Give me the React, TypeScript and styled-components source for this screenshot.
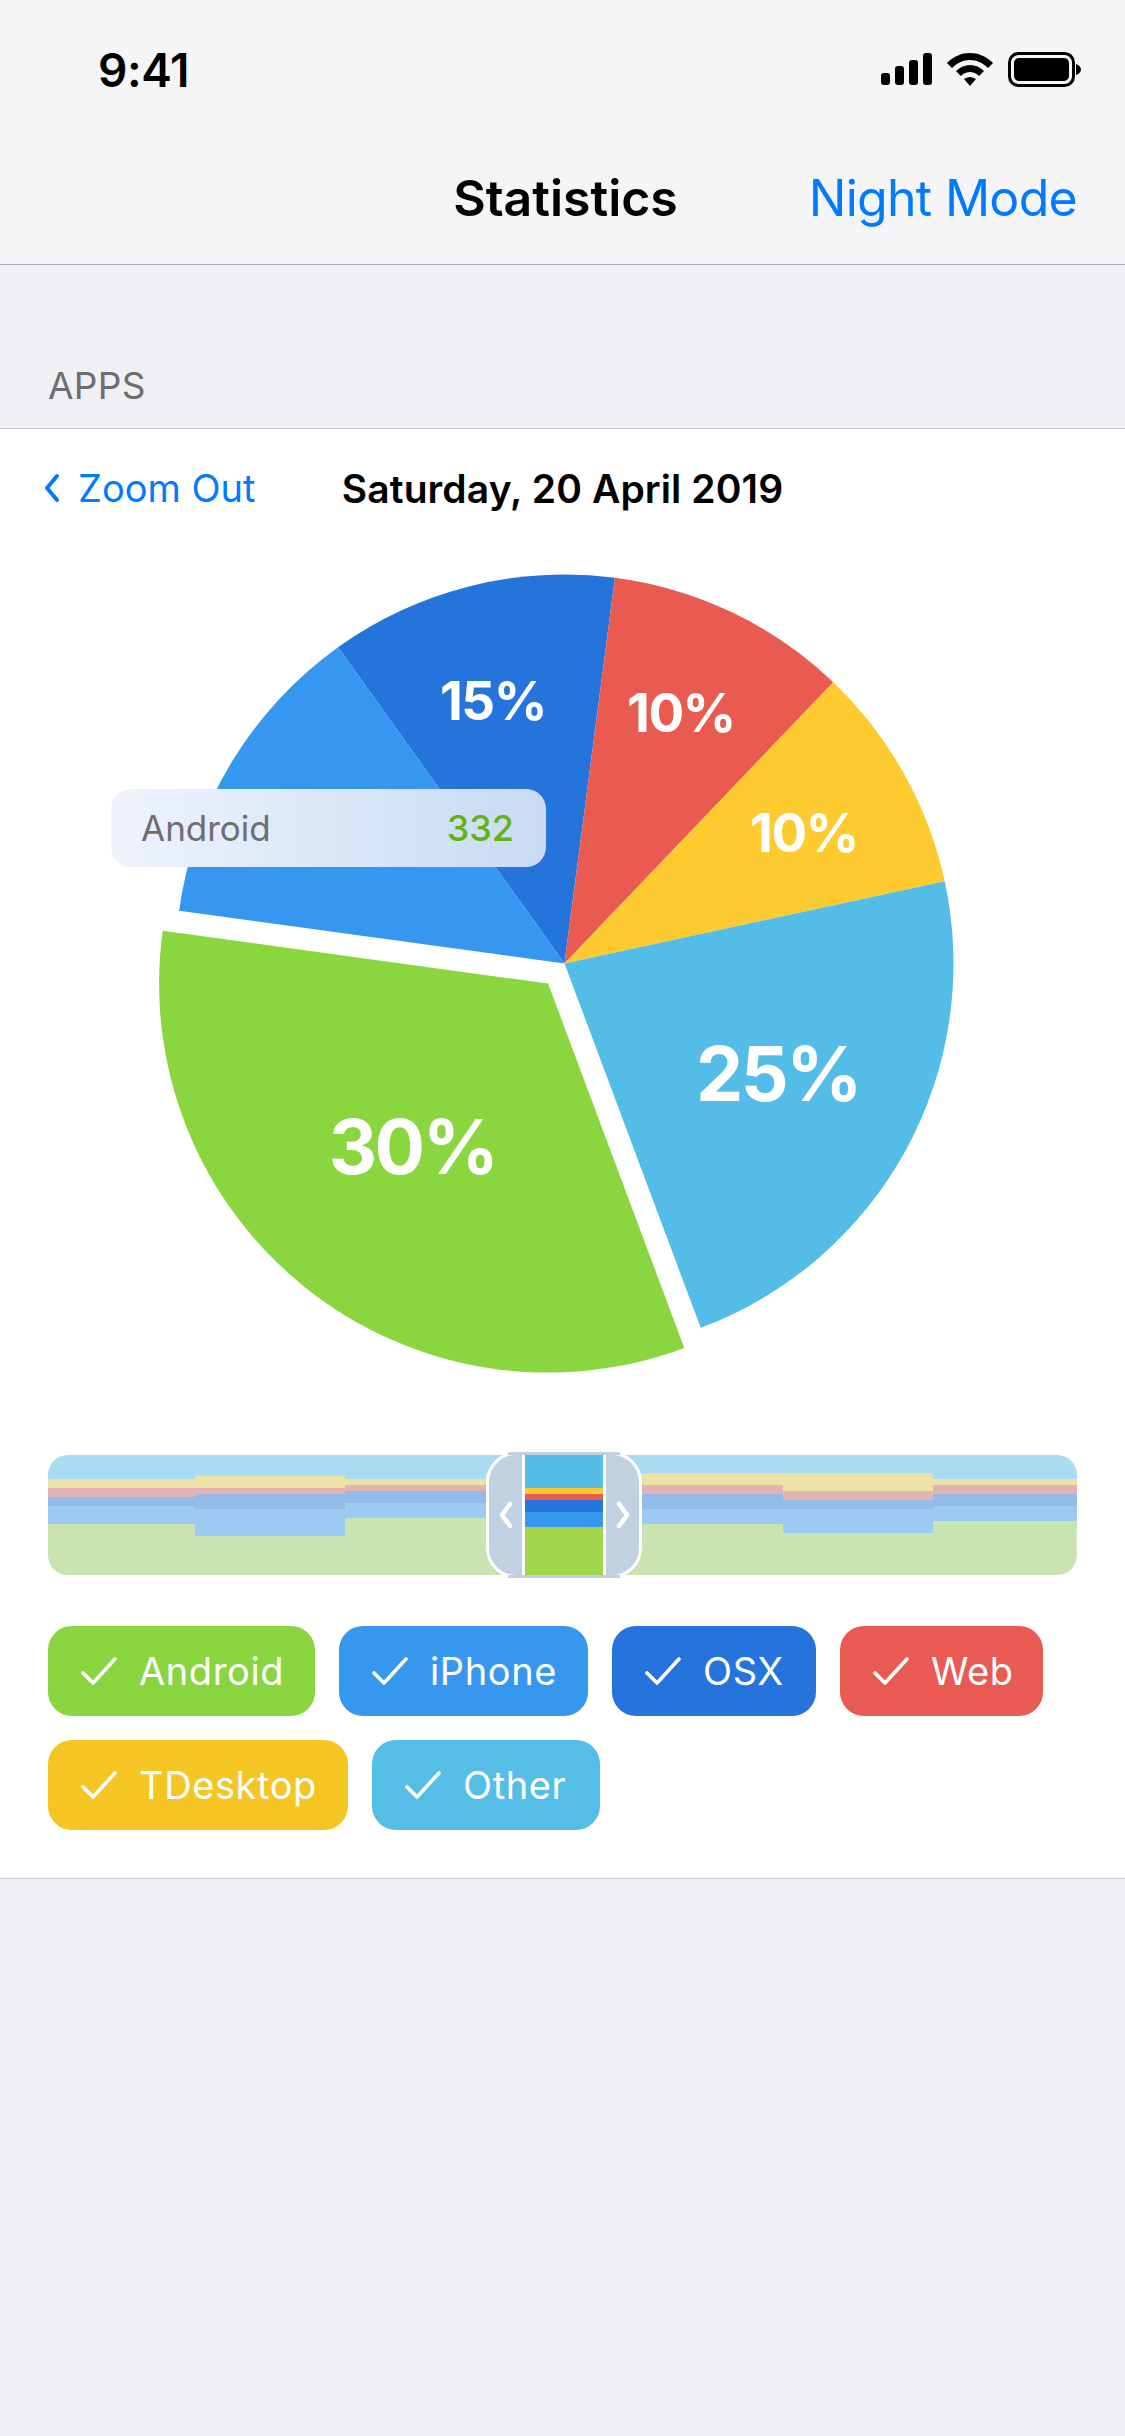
import React from 'react'
import styled, { createGlobalStyle } from 'styled-components'

const GlobalStyle = createGlobalStyle`
  html, body {
    margin: 0;
    padding: 0;
    background: #efeff4;
    font-family: Inter, "Liberation Sans", sans-serif;
  }
`

const Page = styled.div`
  width: 1125px;
  height: 2436px;
  background: #efeff4;
  overflow: hidden;
`

const Header = styled.header`
  background: #f5f5f7;
  border-bottom: 1px solid #adadb0;
`

const StatusBar = styled.div`
  height: 132px;
  box-sizing: border-box;
  padding: 45px 44px 0 98px;
  display: flex;
  justify-content: space-between;
  align-items: flex-start;
`

const Clock = styled.span`
  font-size: 46px;
  line-height: 50px;
  font-weight: 600;
  letter-spacing: -0.4px;
  color: #000;
`

const StatusIcons = styled.svg`
  display: block;
  margin-top: 7px;
`

const NavBar = styled.nav`
  height: 132px;
  box-sizing: border-box;
  padding: 0 48px;
  display: grid;
  grid-template-columns: 1fr auto 1fr;
  align-items: center;
`

const NavTitle = styled.h1`
  grid-column: 2;
  margin: 0 0 0 6px;
  font-size: 50px;
  font-weight: 600;
  color: #000;
`

const NavAction = styled.a`
  grid-column: 3;
  justify-self: end;
  font-size: 50px;
  font-weight: 400;
  letter-spacing: -0.7px;
  color: #007aff;
`

const SectionLabel = styled.div`
  height: 163px;
  box-sizing: border-box;
  padding: 99px 48px 0;
  font-size: 37px;
  line-height: 44px;
  letter-spacing: 0.3px;
  color: #6d6d72;
`

const Card = styled.section`
  background: #fff;
  border-top: 1px solid #c8c7cc;
  border-bottom: 1px solid #c8c7cc;
  padding-bottom: 48px;
`

const ChartTop = styled.div`
  height: 111px;
  box-sizing: border-box;
  padding: 7px 46px 0;
  display: grid;
  grid-template-columns: 1fr auto 1fr;
  align-items: center;
`

const ZoomOut = styled.a`
  margin-left: -2px;
  display: flex;
  align-items: center;
  gap: 18px;
  font-size: 38px;
  color: #007aff;
`

const DateTitle = styled.div`
  font-size: 39px;
  font-weight: 600;
  letter-spacing: 0.1px;
  color: #000;
`

const PieWrap = styled.div`
  position: relative;
  height: 860px;
`

const PieSvg = styled.svg`
  display: block;
`

const PieLabel = styled.text`
  fill: #fff;
  font-family: Inter, "Liberation Sans", sans-serif;
  font-weight: 700;
  text-anchor: middle;
`

const Tooltip = styled.div`
  position: absolute;
  left: 111px;
  top: 249px;
  width: 435px;
  height: 78px;
  box-sizing: border-box;
  padding: 0 32px 0 30px;
  border-radius: 20px;
  background: linear-gradient(90deg, #eff3fb 0%, #d6e5f7 60%, #c9dbf3 100%);
  display: flex;
  justify-content: space-between;
  align-items: center;
`

const TooltipName = styled.span`
  font-size: 35px;
  color: #6d6d72;
`

const TooltipValue = styled.span`
  font-size: 36px;
  font-weight: 500;
  color: #62b216;
`

const Overview = styled.div`
  position: relative;
  margin: 55px 48px 0;
  height: 120px;
`

const OverviewTrack = styled.div`
  height: 120px;
  border-radius: 20px;
  overflow: hidden;
  display: flex;
`

const OverviewColumn = styled.div<{ $width: number }>`
  width: ${(p) => p.$width}px;
  flex: none;
  display: flex;
  flex-direction: column;
`

const Band = styled.div<{ $height: number; $color: string }>`
  height: ${(p) => p.$height}px;
  flex: none;
  background: ${(p) => p.$color};
`

const Handle = styled.div`
  position: absolute;
  left: 438px;
  top: -3px;
  width: 156px;
  height: 126px;
  box-sizing: border-box;
  border: 3px solid #fff;
  border-radius: 30px;
  background: #c0d1e1;
  display: flex;

  /* the white rim only runs round the sides, flat edges stay blue */
  &::before,
  &::after {
    content: '';
    position: absolute;
    left: 19px;
    right: 19px;
    height: 3px;
    background: #c0d1e1;
  }
  &::before {
    top: -3px;
  }
  &::after {
    bottom: -3px;
  }
`

const Grip = styled.div`
  width: 33px;
  display: flex;
  justify-content: center;
  align-items: center;
`

const Strip = styled.div`
  width: 78px;
  flex: none;
  display: flex;
  flex-direction: column;
  border-left: 3px solid #fff;
  border-right: 3px solid #fff;
`

const Chips = styled.div`
  margin: 51px 48px 0;
  display: flex;
  flex-wrap: wrap;
  gap: 24px;
`

const Chip = styled.div<{ $color: string; $width: number }>`
  width: ${(p) => p.$width}px;
  height: 90px;
  box-sizing: border-box;
  padding-left: 33px;
  border-radius: 24px;
  background: ${(p) => p.$color};
  display: flex;
  align-items: center;
  gap: 22px;
  font-size: 38px;
  letter-spacing: 0.6px;
  color: #fff;
`

const CENTER = { x: 564.5, y: 423.5 }
const RADIUS = 389

type Slice = {
  from: number
  to: number
  color: string
  dx?: number
  dy?: number
}

const slices: Slice[] = [
  { from: 324.4, to: 367.45, color: '#2574dc' },
  { from: 7.45, to: 43.7, color: '#e95a51' },
  { from: 43.7, to: 77.8, color: '#fdca2f' },
  { from: 77.8, to: 159.5, color: '#54bde7' },
  { from: 159.5, to: 277.8, color: '#89d63f', dx: -16.4, dy: 20.1 },
  { from: 277.8, to: 324.4, color: '#3597ef' },
]

const labels = [
  { text: '15%', x: 493, y: 180, size: 53, spacing: -1.5 },
  { text: '10%', x: 681, y: 192, size: 53, spacing: -1.5 },
  { text: '10%', x: 804, y: 312, size: 53, spacing: -1.5 },
  { text: '25%', x: 778, y: 561, size: 75, spacing: -2.5 },
  { text: '30%', x: 412.5, y: 634, size: 75, spacing: -2.5 },
]

const point = (deg: number) => {
  const rad = (deg * Math.PI) / 180
  return { x: CENTER.x + RADIUS * Math.sin(rad), y: CENTER.y - RADIUS * Math.cos(rad) }
}

const slicePath = (s: Slice) => {
  const a = point(s.from)
  const b = point(s.to)
  const large = s.to - s.from > 180 ? 1 : 0
  return `M${CENTER.x} ${CENTER.y}L${a.x} ${a.y}A${RADIUS} ${RADIUS} 0 ${large} 1 ${b.x} ${b.y}Z`
}

const overviewColumns = [
  { width: 147, bands: [24, 9, 9, 9, 18, 51] },
  { width: 150, bands: [21, 12, 6, 15, 27, 39] },
  { width: 141, bands: [24, 6, 6, 12, 15, 57] },
  { width: 156, bands: [18, 12, 9, 15, 15, 51] },
  { width: 141, bands: [18, 12, 9, 15, 15, 51] },
  { width: 150, bands: [18, 18, 9, 9, 24, 42] },
  { width: 144, bands: [24, 6, 9, 12, 15, 54] },
]

const overviewColors = ['#a8dcf2', '#ede2a8', '#e3b2b2', '#93bbe9', '#9bcaf3', '#c9e4b0']

const stripBands = [
  { height: 33, color: '#54bde7' },
  { height: 6, color: '#fdca2f' },
  { height: 6, color: '#e95a51' },
  { height: 12, color: '#2574dc' },
  { height: 15, color: '#3597ef' },
  { height: 48, color: '#9fd64a' },
]

const filters = [
  { name: 'Android', color: '#89d53f', width: 267 },
  { name: 'iPhone', color: '#3597ed', width: 249 },
  { name: 'OSX', color: '#2573dc', width: 204 },
  { name: 'Web', color: '#e95a52', width: 203 },
  { name: 'TDesktop', color: '#f5c523', width: 300 },
  { name: 'Other', color: '#55bee7', width: 228 },
]

const Check = () => (
  <svg width="36" height="30" viewBox="0 0 36 30" fill="none">
    <path d="M2 17L12 27L34 3" stroke="#fff" strokeWidth="3.6" strokeLinecap="round" strokeLinejoin="round" />
  </svg>
)

const Chevron = ({ dir }: { dir: 'left' | 'right' }) => (
  <svg width="14" height="28" viewBox="0 0 14 28" fill="none">
    <path
      d={dir === 'left' ? 'M11 3L3 14L11 25' : 'M3 3L11 14L3 25'}
      stroke="#fff"
      strokeWidth="4.5"
      strokeLinecap="round"
      strokeLinejoin="round"
    />
  </svg>
)

const App = () => {
  return (
    <Page>
      <GlobalStyle />
      <Header>
        <StatusBar>
          <Clock>9:41</Clock>
          <StatusIcons width="200" height="36" viewBox="0 0 200 36" fill="#000">
            <rect x="0" y="21" width="9" height="12" rx="3" />
            <rect x="14" y="14" width="9" height="19" rx="3" />
            <rect x="28" y="8" width="9" height="25" rx="3" />
            <rect x="42" y="1" width="9" height="32" rx="3" />
            <path d="M89 1C97 1 105 4 112 11L107 16C102 11 96 8 89 8C82 8 76 11 71 16L66 11C73 4 81 1 89 1Z" />
            <path d="M89 13C94 13 99 15 103 19L98 24C95 21 92 20 89 20C86 20 83 21 80 24L75 19C79 15 84 13 89 13Z" />
            <path d="M89 25C91 25 93 26 95 27L89 34L83 27C85 26 87 25 89 25Z" />
            <rect x="128.500" y="1.500" width="64" height="32" rx="9" fill="none" stroke="#000" strokeWidth="3" />
            <rect x="133" y="6" width="55" height="23" rx="5" />
            <path d="M195 12C198 13 200 15 200 17.500C200 20 198 22 195 23Z" />
          </StatusIcons>
        </StatusBar>
        <NavBar>
          <NavTitle>Statistics</NavTitle>
          <NavAction>Night Mode</NavAction>
        </NavBar>
      </Header>

      <SectionLabel>APPS</SectionLabel>

      <Card>
        <ChartTop>
          <ZoomOut>
            <svg width="16" height="30" viewBox="0 0 16 30" fill="none">
              <path d="M13 3L3 15L13 27" stroke="#007aff" strokeWidth="4" strokeLinecap="round" strokeLinejoin="round" />
            </svg>
            Zoom Out
          </ZoomOut>
          <DateTitle>Saturday, 20 April 2019</DateTitle>
        </ChartTop>

        <PieWrap>
          <PieSvg width="1125" height="860" viewBox="0 0 1125 860">
            {slices.map((s) => (
              <path
                key={s.color}
                d={slicePath(s)}
                fill={s.color}
                transform={s.dx ? `translate(${s.dx} ${s.dy})` : undefined}
              />
            ))}
            {labels.map((l) => (
              <PieLabel key={l.x} x={l.x} y={l.y} fontSize={l.size} letterSpacing={l.spacing}>
                {l.text}
              </PieLabel>
            ))}
          </PieSvg>
          <Tooltip>
            <TooltipName>Android</TooltipName>
            <TooltipValue>332</TooltipValue>
          </Tooltip>
        </PieWrap>

        <Overview>
          <OverviewTrack>
            {overviewColumns.map((c, i) => (
              <OverviewColumn key={i} $width={c.width}>
                {c.bands.map((h, j) => (
                  <Band key={j} $height={h} $color={overviewColors[j]} />
                ))}
              </OverviewColumn>
            ))}
          </OverviewTrack>
          <Handle>
            <Grip>
              <Chevron dir="left" />
            </Grip>
            <Strip>
              {stripBands.map((b) => (
                <Band key={b.color} $height={b.height} $color={b.color} />
              ))}
            </Strip>
            <Grip>
              <Chevron dir="right" />
            </Grip>
          </Handle>
        </Overview>

        <Chips>
          {filters.map((f) => (
            <Chip key={f.name} $color={f.color} $width={f.width}>
              <Check />
              {f.name}
            </Chip>
          ))}
        </Chips>
      </Card>
    </Page>
  )
}

export default App
